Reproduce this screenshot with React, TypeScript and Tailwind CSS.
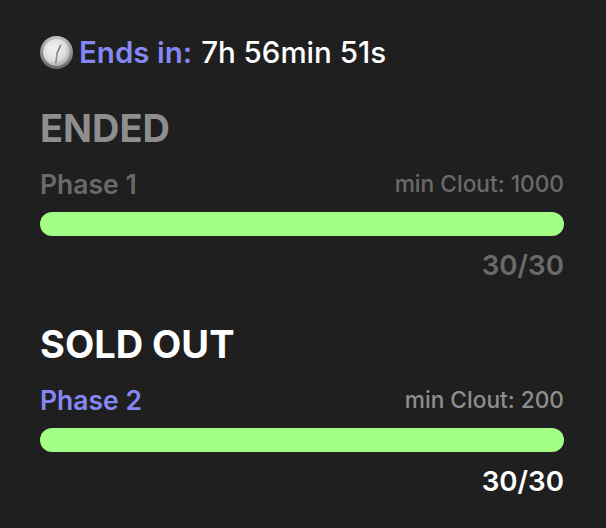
import React from 'react';

const font = { fontFamily: 'Inter, sans-serif' };

const ClockEmoji = () => (
  <svg width="33" height="33" viewBox="0 0 32 32" className="shrink-0">
    <defs>
      <radialGradient id="face" cx="42%" cy="38%" r="65%">
        <stop offset="0%" stopColor="#f4f4f4" />
        <stop offset="65%" stopColor="#dedede" />
        <stop offset="100%" stopColor="#a6a6a6" />
      </radialGradient>
      <linearGradient id="rim" x1="0" y1="0" x2="0" y2="1">
        <stop offset="0%" stopColor="#c4c4c4" />
        <stop offset="55%" stopColor="#8a8a8a" />
        <stop offset="100%" stopColor="#666666" />
      </linearGradient>
    </defs>
    <circle cx="16" cy="16" r="16" fill="url(#rim)" />
    <circle cx="16" cy="16" r="13" fill="url(#face)" />
    <path d="M16.7 16.5 L20 9" stroke="#777777" strokeWidth="1.5" strokeLinecap="round" />
    <path d="M16.7 16.5 L15.3 26" stroke="#8c8c8c" strokeWidth="1.5" strokeLinecap="round" />
  </svg>
);

const Phase = ({
  status,
  name,
  clout,
  ended,
}: {
  status: string;
  name: string;
  clout: string;
  ended?: boolean;
}) => (
  <div>
    <div className={`text-[38px] leading-[44px] font-bold ${ended ? 'text-[#8e8e8e]' : 'text-white'}`}>{status}</div>
    <div className="mt-[18px] flex items-center justify-between">
      <span className={`text-[26.5px] leading-[32px] font-semibold ${ended ? 'text-[#6a6a6a]' : 'text-[#8587f5]'}`}>{name}</span>
      <span className={`text-[22.7px] leading-[32px] font-medium ${ended ? 'text-[#6a6a6a]' : 'text-[#8e8e8e]'}`}>{clout}</span>
    </div>
    <div className="mt-[12px] h-[24px] rounded-[12px] bg-[#a3ff86]" />
    <div className={`mt-[12px] pt-[1px] text-right text-[27.7px] leading-[32px] font-semibold ${ended ? 'text-[#6a6a6a]' : 'text-white'}`}>30/30</div>
  </div>
);

export default function App() {
  return (
    <div style={font} className="h-[528px] w-[606px] bg-[#1f1f1f] pl-[40px] pr-[42px] pt-[32px]">
      <div className="flex items-center text-[29.5px] leading-[40px]">
        <ClockEmoji />
        <span className="ml-[6px] font-semibold text-[#8587f5]">Ends in:</span>
        <span className="ml-[9px] font-medium text-white">7h 56min 51s</span>
      </div>
      <div className="mt-[34px] flex flex-col gap-[41px]">
        <Phase ended status="ENDED" name="Phase 1" clout="min Clout: 1000" />
        <Phase status="SOLD OUT" name="Phase 2" clout="min Clout: 200" />
      </div>
    </div>
  );
}
